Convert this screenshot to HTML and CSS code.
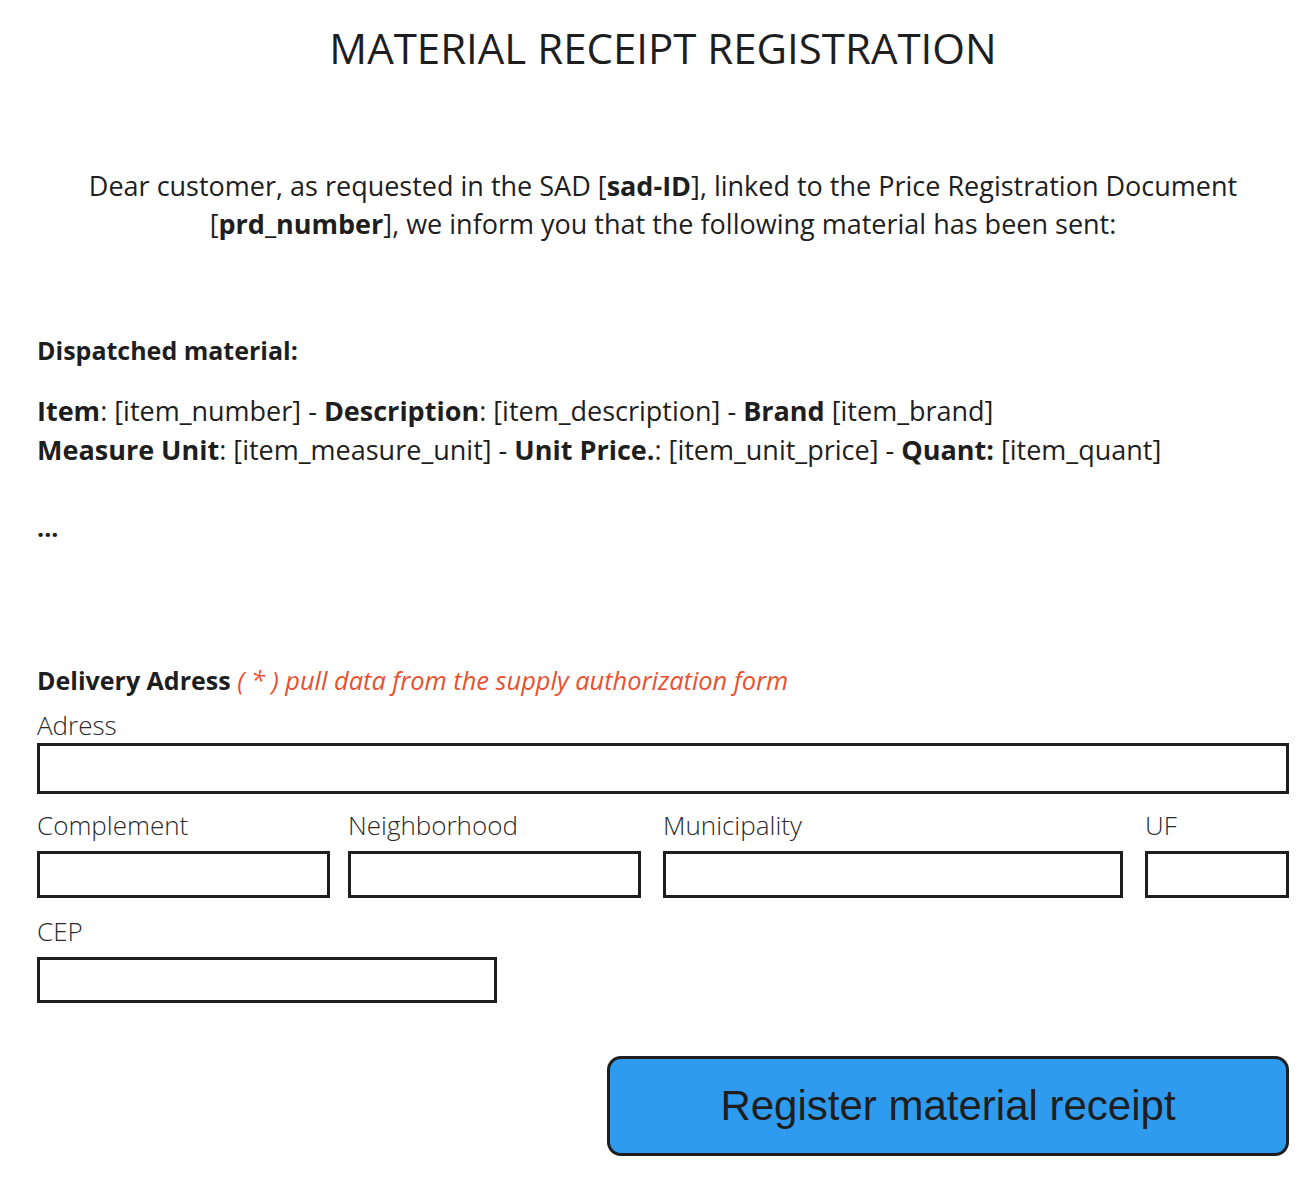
FILE: index.html
```html
<!DOCTYPE html>
<html>
<head>
<meta charset="utf-8">
<link rel="stylesheet" href="styles.css">
</head>
<body>
<div class="page">
  <h1 class="title">MATERIAL RECEIPT REGISTRATION</h1>
  <p class="intro">Dear customer, as requested in the SAD [<b>sad-ID</b>], linked to the Price Registration Document [<b>prd_number</b>], we inform you that the following material has been sent:</p>
  <h2 class="section">Dispatched material:</h2>
  <p class="items"><b>Item</b>: [item_number] - <b>Description</b>: [item_description] - <b>Brand</b> [item_brand]<br><b>Measure Unit</b>: [item_measure_unit] - <b>Unit Price.</b>: [item_unit_price] - <b>Quant:</b> [item_quant]</p>
  <p class="dots"><b>...</b></p>
  <h2 class="delivery">Delivery Adress <span class="note">( * ) pull data from the supply authorization form</span></h2>
  <div class="field f-adr">
    <label class="lbl">Adress</label>
    <div class="box box-tall"></div>
  </div>
  <div class="row">
    <div class="field f-comp"><label class="lbl">Complement</label><div class="box"></div></div>
    <div class="field f-neigh"><label class="lbl">Neighborhood</label><div class="box"></div></div>
    <div class="field f-mun"><label class="lbl">Municipality</label><div class="box"></div></div>
    <div class="field f-uf"><label class="lbl">UF</label><div class="box"></div></div>
  </div>
  <div class="field f-cep"><label class="lbl">CEP</label><div class="box box-cep"></div></div>
  <div class="actions">
    <button class="btn">Register material receipt</button>
  </div>
</div>
</body>
</html>
```
FILE: styles.css
```css
* { box-sizing: border-box; }
body { margin: 0; background: #fff; font-family: "Open Sans", sans-serif; color: #1e1e1e; }
.page { width: 1315px; padding: 0 26px 0 37px; }
.title { margin: 0; padding-top: 23px; text-align: center; font-weight: 400; font-size: 42px; line-height: 50px; }
.intro { margin: 94px 0 0; text-align: center; font-size: 27px; line-height: 38px; padding: 0 12px; }
.intro b, .items b { font-weight: 700; }
.section { margin: 90px 0 0; font-size: 25px; line-height: 34px; font-weight: 700; }
.items { margin: 24px 0 0; font-size: 27px; line-height: 39px; }
.dots { margin: 43px 0 0; font-size: 25px; line-height: 30px; }
.delivery { margin: 121px 0 0; font-size: 25px; line-height: 34px; font-weight: 700; }
.note { color: #e8502f; font-style: italic; font-weight: 400; font-size: 25.4px; }
.field { display: flex; flex-direction: column; }
.lbl { font-size: 26px; line-height: 32px; margin-bottom: 10px; font-weight: 300; color: #2a2a2a; }
.f-adr { margin-top: 12px; }
.f-adr .lbl { margin-bottom: 2px; }
.box { border: 3px solid #1e1e1e; height: 47px; background: #fff; }
.box-tall { height: 51px; }
.box-cep { height: 46px; }
.row { display: flex; margin-top: 15px; }
.f-comp { width: 293px; margin-right: 18px; }
.f-neigh { width: 293px; margin-right: 22px; }
.f-mun { width: 460px; margin-right: 22px; }
.f-uf { width: 144px; }
.f-cep { width: 460px; margin-top: 17px; }
.actions { display: flex; justify-content: flex-end; margin-top: 53px; }
.btn { width: 682px; height: 100px; background: #2f9bef; border: 3px solid #1e1e1e; border-radius: 14px; font-family: "Liberation Sans", Arial, sans-serif; font-size: 42px; color: #1e1e1e; padding: 0; }
```
